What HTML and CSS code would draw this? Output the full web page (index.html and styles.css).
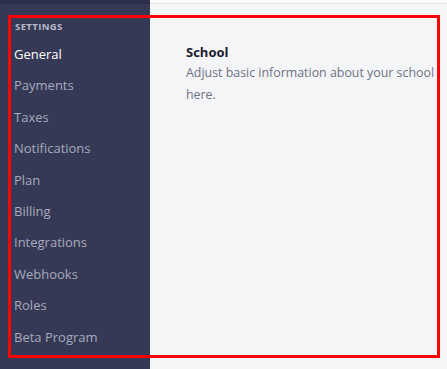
FILE: index.html
```html
<!DOCTYPE html>
<html lang="en">
<head>
  <meta charset="UTF-8">
  <meta name="viewport" content="width=device-width, initial-scale=1.0">
  <title>Settings</title>
  <link rel="stylesheet" href="styles.css">
</head>
<body>

  <div class="layout">
    <nav class="sidebar">
      <div class="sidebar-top"></div>
      <h3 class="nav-title">Settings</h3>
      <ul class="nav-list">
        <li class="active">General</li>
        <li>Payments</li>
        <li>Taxes</li>
        <li>Notifications</li>
        <li>Plan</li>
        <li>Billing</li>
        <li>Integrations</li>
        <li>Webhooks</li>
        <li>Roles</li>
        <li>Beta Program</li>
      </ul>
    </nav>

    <main class="content">
      <div class="content-top"></div>
      <section class="panel">
        <h2>School</h2>
        <p>Adjust basic information about your school here.</p>
      </section>
    </main>
  </div>

  <div class="highlight"></div>

</body>
</html>
```

FILE: styles.css
```css
body {
  font-family: 'Open Sans', 'Noto Sans', sans-serif;
  margin: 0;
  background-color: #f4f5f7;
  height: 100vh;
  overflow: hidden;
}

.layout {
  display: flex;
  height: 100%;
}

.sidebar {
  width: 150px;
  background-color: #363955;
  flex-shrink: 0;
}

.sidebar-top {
  height: 4px;
  background-color: #2c2e47;
}

.nav-title {
  margin: 17px 0 0 15px;
  font-size: 9.5px;
  font-weight: 700;
  letter-spacing: 0.4px;
  text-transform: uppercase;
  color: #b7bacb;
  line-height: 12px;
}

.nav-list {
  list-style: none;
  margin: 6px 0 0;
  padding: 0 0 0 14px;
}

.nav-list li {
  font-size: 13px;
  line-height: 31.4px;
  color: #a7aabc;
}

.nav-list li.active {
  color: #fff;
}

.content {
  flex: 1;
}

.content-top {
  height: 3px;
  background-color: #fbfbfc;
  border-bottom: 1px solid #e4e5ea;
}

.panel {
  padding: 38px 0 0 36px;
}

.panel h2 {
  margin: 0;
  font-size: 13px;
  font-weight: 700;
  color: #1b1c2e;
  line-height: 20px;
}

.panel p {
  margin: 0;
  font-size: 12.4px;
  line-height: 22px;
  color: #6e7184;
  width: 258px;
}

.highlight {
  position: absolute;
  left: 8px;
  top: 15px;
  width: 426px;
  height: 337px;
  border: 3px solid #ff0000;
}
```
